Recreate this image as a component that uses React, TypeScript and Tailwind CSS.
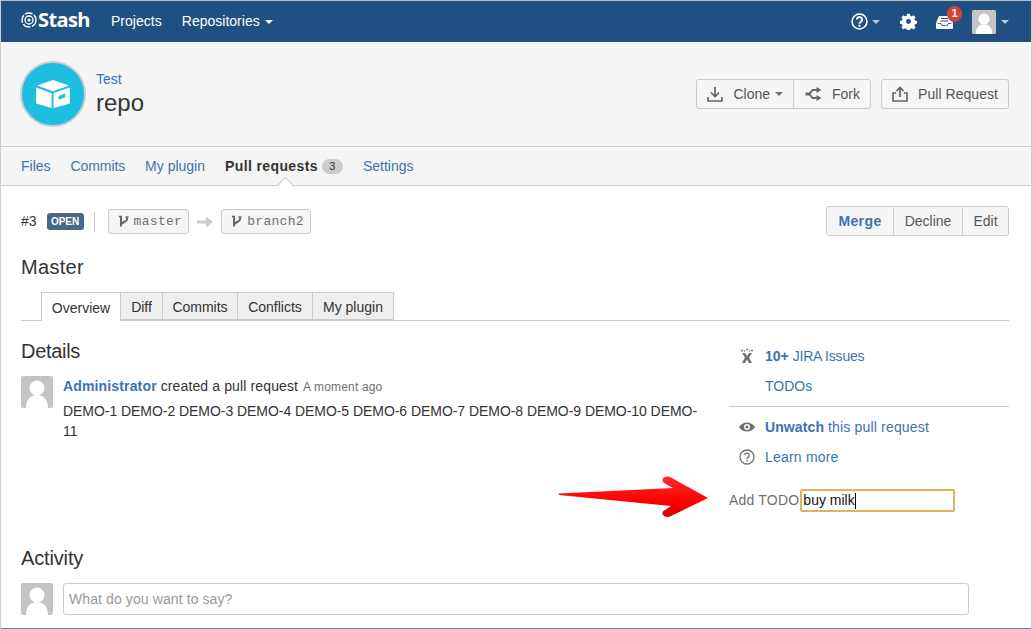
import React from 'react';

const Caret = ({ className = 'border-t-white' }: { className?: string }) => (
  <span className={`inline-block w-0 h-0 border-x-[4px] border-x-transparent border-t-[4px] ${className}`} />
);

const Avatar = ({ size }: { size: string }) => (
  <svg viewBox="0 0 32 32" className={size}>
    <rect width="32" height="32" rx="2" fill="#c4c4c4" />
    <circle cx="16" cy="12" r="7.5" fill="#fff" />
    <path d="M5 32c0-8 4-13 11-13s11 5 11 13z" fill="#fff" />
  </svg>
);

const Logo = () => (
  <svg viewBox="0 0 16 16" className="w-[16px] h-[16px]" fill="none" stroke="#fff">
    <circle cx="8" cy="8" r="7" strokeWidth="1.4" strokeDasharray="8 1.5" />
    <circle cx="8" cy="8" r="4" strokeWidth="1.3" />
    <circle cx="8" cy="8" r="1.5" fill="#fff" stroke="none" />
  </svg>
);

const BranchIcon = () => (
  <svg viewBox="0 0 12 12" className="w-[12px] h-[13px]" fill="none" stroke="#666" strokeWidth="2">
    <path d="M4 1v10M10 2v2c0 2.500-6 2.500-6 5.500" />
    <path d="M2 1h3M8.500 1.500h3" strokeWidth="1.500" />
  </svg>
);

const BranchLabel = ({ name }: { name: string }) => (
  <span className="flex items-center gap-[5px] h-[25px] pl-[8px] pr-[6px] rounded-[3px] border border-[#ccc] bg-[#f5f5f5] text-[#707070] text-[13px] tracking-[0.3px] font-['Liberation_Mono',monospace]">
    <BranchIcon />
    {name}
  </span>
);

export default function App() {
  return (
    <div className="relative w-[1032px] h-[629px] overflow-hidden bg-white border-x border-[#cfcfcf] text-[14px] text-[#333] font-['Liberation_Sans',Arial,sans-serif]">
      {/* Top nav */}
      <div className="h-[1px] bg-[#bdbdbd] -mx-px" />
      <header className="h-[41px] bg-[#205081] flex items-center pl-[20px] pr-[22px] text-white">
        <div className="flex items-center gap-[1px] text-[20px] font-bold leading-none mr-[21px] mb-[3px]">
          <Logo />
          <span className="font-['Open_Sans',sans-serif] tracking-[-0.6px]">Stash</span>
        </div>
        <span className="mr-[20px] tracking-[0.05px]">Projects</span>
        <span className="flex items-center gap-[5px]">Repositories <Caret /></span>
        <div className="ml-auto flex items-center">
          <svg viewBox="0 0 16 16" className="w-[17px] h-[17px]" fill="none" stroke="#fff" strokeWidth="1.500">
            <circle cx="8" cy="8" r="7" />
            <path d="M5.500 6.200a2.500 2.400 0 1 1 3.900 2c-.9.600-1.400 1-1.400 2" strokeWidth="1.900" />
            <path d="M8 11v2" strokeWidth="1.900" />
          </svg>
          <Caret className="border-t-[#b9c8d8] ml-[4px]" />
          <svg viewBox="0 0 24 24" className="w-[17px] h-[17px] ml-[20px]" fill="#fff">
            <path d="M10 1h4l.6 3 2 .9 2.600-1.700 2.800 2.800-1.700 2.600.9 2 3 .6v4l-3 .6-.9 2 1.700 2.600-2.800 2.800-2.600-1.700-2 .9-.6 3h-4l-.6-3-2-.9-2.600 1.700-2.800-2.800 1.700-2.600-.9-2-3-.6v-4l3-.6.9-2L2 6l2.800-2.800L7.400 4.900l2-.9zM12 8.500a3.500 3.500 0 1 0 0 7 3.500 3.500 0 0 0 0-7z" fillRule="evenodd" />
          </svg>
          <span className="relative ml-[19px] w-[17px] h-[14px]">
            <svg viewBox="0 0 17 14" className="w-[17px] h-[14px]" fill="#fff">
              <path d="M3 1h11l3 7v5a1 1 0 0 1-1 1H1a1 1 0 0 1-1-1V8z" />
              <path d="M5 3h7v1H5zM4.500 5.500h8v1h-8zM1.500 8h3.500l1 2h5l1-2h3.500v.7h-3l-1 2H5.500l-1-2h-3z" fill="#205081" />
            </svg>
            <span className="absolute -top-[9px] left-[11px] w-[15px] h-[16px] rounded-full bg-[#d04437] text-white text-[11px] font-bold flex items-center justify-center">1</span>
          </span>
          <span className="ml-[19px]"><Avatar size="w-[24px] h-[24px] block" /></span>
          <Caret className="border-t-[#b9c8d8] ml-[5px]" />
        </div>
      </header>

      {/* Repo header */}
      <section className="h-[105px] bg-[#f5f5f5] border-b border-[#ccc] flex items-center justify-between pl-[19px] pr-[22px]">
        <div className="flex items-center gap-[10px]">
          <span className="w-[66px] h-[66px] rounded-full bg-[#1ebee0] border-2 border-[#ccc] flex items-center justify-center">
            <svg viewBox="0 0 36 32" className="w-[36px] h-[30px]" fill="#fff">
              <path d="M18 1l17 6-17 6L1 7z" />
              <path d="M0 9l16.500 6v16L0 26zM36 9l-17.500 6v16L36 26zM24 18l7-2.500v4L24 22z" fillRule="evenodd" />
            </svg>
          </span>
          <div className="flex flex-col mb-[4px]">
            <a className="text-[#3b73af] leading-[20px]">Test</a>
            <span className="text-[24px] leading-[27px] text-[#333]">repo</span>
          </div>
        </div>
        <div className="flex items-center gap-[10px] text-[#555]">
          <div className="flex h-[30px] rounded-[3px] border border-[#ccc] bg-[#f5f5f5]">
            <span className="flex items-center gap-[9px] pl-[10px] pr-[10px] border-r border-[#ccc]">
              <svg viewBox="0 0 16 16" className="w-[16px] h-[16px] mr-px" fill="none" stroke="#666" strokeWidth="1.700">
                <path d="M8 1v9M4 6.500l4 4 4-4M1 11v4h14v-4" />
              </svg>
              Clone <Caret className="border-t-[#707070] -ml-[4px]" />
            </span>
            <span className="flex items-center gap-[10px] pl-[11px] pr-[10px]">
              <svg viewBox="0 0 16 14" className="w-[17px] h-[14px]" fill="none" stroke="#666" strokeWidth="1.800">
                <path d="M4 7l3-4h5M4 7l3 4h5" />
                <path d="M0 5.500h5v3H0zM11 0l5 3-5 3zM11 8l5 3-5 3z" fill="#666" stroke="none" />
              </svg>
              Fork
            </span>
          </div>
          <span className="flex items-center gap-[10px] h-[30px] pl-[10px] pr-[10px] rounded-[3px] border border-[#ccc] bg-[#f5f5f5] tracking-[0.05px]">
            <svg viewBox="0 0 16 16" className="w-[16px] h-[16px]" fill="none" stroke="#666" strokeWidth="1.700">
              <path d="M8 11V2M4.500 5L8 1.500 11.500 5M4 7H1v8h14V7h-3" />
            </svg>
            Pull Request
          </span>
        </div>
      </section>

      {/* Repo tabs */}
      <nav className="relative h-[39px] flex items-center gap-[20px] pl-[20px] border-b border-[#ccc] bg-[#f5f5f5] text-[#3b73af]">
        <span>Files</span>
        <span className="tracking-[-0.1px]">Commits</span>
        <span>My plugin</span>
        <span className="flex items-center gap-[4px] font-bold text-[#333]">
          <span className="tracking-[0.38px]">Pull requests</span>
          <span className="w-[21px] h-[15px] rounded-full bg-[#ccc] text-[#333] font-normal text-[11px] flex items-center justify-center">3</span>
        </span>
        <span>Settings</span>
        {/* Selected tab notch */}
        <span className="absolute left-[279px] -bottom-[5px] w-[11px] h-[11px] rotate-45 bg-white border-l border-t border-[#ccc]" />
      </nav>

      {/* Pull request */}
      <main className="pl-[20px] pr-[22px]">
        <div className="flex items-center justify-between mt-[20px] h-[30px]">
          <div className="flex items-center mt-px">
            <span>#3</span>
            <span className="ml-[10px] w-[37px] justify-center h-[17px] rounded-[3px] bg-[#4a6785] text-white text-[10px] font-bold flex items-center">OPEN</span>
            <span className="ml-[10px] mr-[13px] w-px h-[20px] bg-[#ccc]" />
            <BranchLabel name="master" />
            <svg viewBox="0 0 16 14" className="w-[16px] h-[14px] mx-[8px]" fill="#ccc">
              <path d="M0 5.500h9V1.500L16 7l-7 5.500v-4H0z" />
            </svg>
            <BranchLabel name="branch2" />
          </div>
          <div className="flex h-[30px] rounded-[3px] border border-[#ccc] bg-[#f5f5f5] text-[#555]">
            <span className="flex items-center w-[67px] justify-center font-bold text-[#3b73af] border-r border-[#ccc] tracking-[0.4px]">Merge</span>
            <span className="flex items-center w-[69px] justify-center border-r border-[#ccc]">Decline</span>
            <span className="flex items-center w-[45px] justify-center">Edit</span>
          </div>
        </div>

        <h1 className="text-[20px] leading-[24px] mt-[19px] tracking-[0.3px]">Master</h1>

        <div className="flex h-[29px] mt-[13px] pl-[20px] border-b border-[#ccc]">
          <span className="h-[29px] w-[80px] pt-[2px] flex items-center justify-center border border-b-0 border-[#ccc] bg-white">Overview</span>
          <span className="h-[28px] w-[42px] pt-[2px] flex items-center justify-center border-y border-r border-[#ccc] bg-[#eee]">Diff</span>
          <span className="h-[28px] w-[75px] pt-[2px] flex items-center justify-center border-y border-r border-[#ccc] bg-[#eee]">Commits</span>
          <span className="h-[28px] w-[75px] pt-[2px] flex items-center justify-center border-y border-r border-[#ccc] bg-[#eee]">Conflicts</span>
          <span className="h-[28px] w-[81px] pt-[2px] flex items-center justify-center border-y border-r border-[#ccc] bg-[#eee]">My plugin</span>
        </div>

        <div className="flex mt-[18px]">
          <div className="w-[708px] pr-[20px]">
            <h2 className="text-[20px] leading-[24px] tracking-[-0.3px]">Details</h2>
            <div className="flex gap-[10px] mt-[13px]">
              <Avatar size="w-[32px] h-[32px] shrink-0" />
              <div>
                <p className="leading-[20px]">
                  <a className="font-bold text-[#3b73af] tracking-[0.15px]">Administrator</a>{' '}
                  <span className="tracking-[0.13px]">created a pull request</span>{' '}
                  <span className="ml-px text-[12px] text-[#707070] tracking-[0.17px]">A moment ago</span>
                </p>
                <p className="leading-[20px] mt-[4px] tracking-[-0.05px]">
                  DEMO-1 DEMO-2 DEMO-3 DEMO-4 DEMO-5 DEMO-6 DEMO-7 DEMO-8 DEMO-9 DEMO-10 DEMO-11
                </p>
              </div>
            </div>
          </div>
          <aside className="w-[280px] text-[#3b73af]">
            <div className="flex items-center h-[20px] mt-[7px] pl-[10px]">
              <svg viewBox="0 0 16 16" className="w-[16px] h-[16px] mr-[10px]" fill="#707070">
                <path d="M3 5h3l2 3 2-3h3L10 9.500l3 5.500h-3L8 11.500 6 15H3l3-5.500z" />
                <circle cx="3" cy="2.500" r="1" /><circle cx="8" cy="1.500" r="1" /><circle cx="13" cy="2.500" r="1" /><circle cx="5.500" cy="3" r=".8" /><circle cx="10.500" cy="3" r=".8" />
              </svg>
              <b>10+</b>&nbsp;<span className="tracking-[-0.2px]">JIRA Issues</span>
            </div>
            <div className="h-[20px] mt-[10px] pl-[36px] flex items-center">TODOs</div>
            <div className="h-px bg-[#ccc] mt-[10px]" />
            <div className="flex items-center h-[20px] mt-[10px] pl-[10px]">
              <svg viewBox="0 0 16 16" className="w-[16px] h-[16px] mr-[10px]" fill="#707070">
                <path d="M0 8c2-3 5-4.500 8-4.500S14 5 16 8c-2 3-5 4.500-8 4.500S2 11 0 8zm8 3a3 3 0 1 0 0-6 3 3 0 0 0 0 6zm0-1.500a1.500 1.500 0 1 1 0-3 1.500 1.500 0 0 1 0 3z" fillRule="evenodd" />
              </svg>
              <b className="tracking-[0.1px]">Unwatch</b>&nbsp;<span className="tracking-[0.18px]">this pull request</span>
            </div>
            <div className="flex items-center h-[20px] mt-[10px] pl-[10px]">
              <svg viewBox="0 0 16 16" className="w-[16px] h-[16px] mr-[10px]" fill="none" stroke="#707070" strokeWidth="1.300">
                <circle cx="8" cy="8" r="7" />
                <path d="M5.800 6.200a2.200 2.200 0 1 1 3.400 1.900c-.8.500-1.200.9-1.200 1.800M8 11v1.500" />
              </svg>
              <span className="tracking-[0.2px]">Learn more</span>
            </div>
            <div className="flex items-center mt-[22px] text-[#707070]">
              <span className="tracking-[0.2px]">Add TODO</span>
              <span className="ml-[1px] w-[155px] h-[23px] border-2 border-[#e0b45c] rounded-[2px] bg-white text-[#111] flex items-center pl-[1px]">
                buy milk<span className="w-px h-[16px] bg-black" />
              </span>
            </div>
          </aside>
        </div>

        <h2 className="text-[20px] leading-[24px] mt-[34px] tracking-[-0.15px]">Activity</h2>
        <div className="flex gap-[10px] mt-[13px]">
          <Avatar size="w-[32px] h-[32px] shrink-0" />
          <div className="w-[906px] h-[32px] rounded-[3px] border border-[#ccc] px-[5px] flex items-center text-[#999] tracking-[0.1px]">What do you want to say?</div>
        </div>
      </main>

      {/* Window edge */}
      <div className="absolute left-0 right-0 bottom-0 h-px bg-[#5f86a8]" />

      {/* Annotation arrow */}
      <svg viewBox="0 0 150 46" className="absolute left-[557px] top-[475px] w-[150px] h-[46px]">
        <defs>
          <linearGradient id="arrowFill" x1="0" y1="0" x2="0" y2="1">
            <stop offset="0" stopColor="#ff2a2a" />
            <stop offset="0.6" stopColor="#f00" />
            <stop offset="1" stopColor="#d80000" />
          </linearGradient>
        </defs>
        <path d="M1 18.500L115 13L106 8Q103 4 106 2.500Q109 .5 113 2.500L150 23L113 41Q108 43.500 105 40Q103 37 107 35L113 31L1 20Z" fill="url(#arrowFill)" />
      </svg>
    </div>
  );
}
